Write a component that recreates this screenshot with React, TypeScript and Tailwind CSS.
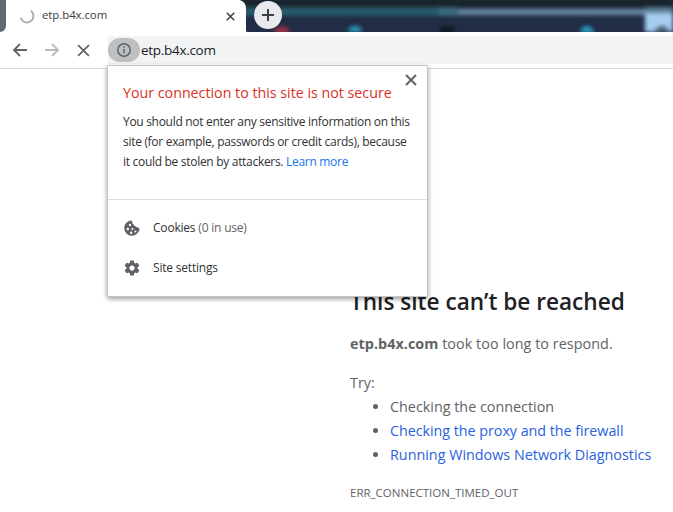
import React from "react";

function Cookie() {
  return (
    <svg width="16" height="16" viewBox="0 0 16 16">
      <path fill="#5f6368" d="M8 .4a7.700 7.700 0 1 0 7.600 7.800c-.9.100-1.500-.2-1.800-.9-1 .2-1.800-.2-2.100-1-1.200.1-2.100-.8-2-2C8.800 4 8 2.500 8 .4z" />
      <circle cx="6" cy="5" r="1.200" fill="#fff" />
      <circle cx="3.800" cy="9" r="1.200" fill="#fff" />
      <circle cx="8.300" cy="9" r="1" fill="#fff" />
      <circle cx="7.200" cy="12.700" r="1.200" fill="#fff" />
      <circle cx="11.500" cy="11.500" r="1" fill="#fff" />
    </svg>
  );
}

function Gear() {
  return (
    <svg width="18" height="18" viewBox="0 0 24 24">
      <path fill="#5f6368" d="M19.430 12.980c.04-.32.07-.64.07-.98s-.03-.66-.07-.98l2.110-1.650c.19-.15.240-.42.120-.64l-2-3.460c-.12-.22-.39-.3-.61-.22l-2.490 1c-.52-.4-1.080-.73-1.690-.98l-.38-2.650A.488.488 0 0 0 14 2h-4c-.25 0-.46.18-.49.420l-.38 2.650c-.61.25-1.170.59-1.690.98l-2.490-1c-.23-.09-.49 0-.61.220l-2 3.460c-.13.22-.07.49.120.64l2.110 1.650c-.04.32-.07.65-.07.980s.03.66.07.98l-2.110 1.650c-.19.15-.24.42-.12.64l2 3.460c.12.22.39.3.61.22l2.490-1c.52.4 1.080.73 1.690.98l.38 2.650c.03.24.24.42.49.42h4c.25 0 .46-.18.49-.42l.38-2.650c.61-.25 1.170-.59 1.690-.98l2.490 1c.23.09.49 0 .61-.22l2-3.460c.12-.22.07-.49-.12-.64l-2.110-1.650zM12 15.500c-1.930 0-3.500-1.570-3.500-3.500s1.570-3.500 3.500-3.500 3.500 1.570 3.500 3.500-1.570 3.500-3.500 3.500z" />
    </svg>
  );
}

function X({ size, color, w }: { size: number; color: string; w: number }) {
  return (
    <svg width={size} height={size} viewBox="0 0 12 12">
      <path d="M1 1l10 10M11 1L1 11" stroke={color} strokeWidth={w} fill="none" />
    </svg>
  );
}

function Arrow({ color, flip }: { color: string; flip?: boolean }) {
  return (
    <svg width="16" height="14" viewBox="0 0 16 14" className={flip ? "rotate-180" : ""}>
      <path d="M15 7H2M8 1L2 7l6 6" stroke={color} strokeWidth="1.800" fill="none" />
    </svg>
  );
}

export default function App() {
  return (
    <div className="w-[673px] h-[512px] overflow-hidden bg-white relative font-['Open_Sans','Noto_Sans',sans-serif]">
      {/* tab strip */}
      <div className="h-[32px] flex relative bg-white overflow-hidden">
        {/* blurred window behind the tab strip */}
        <div className="absolute left-[240px] right-0 top-0 bottom-0 rounded-bl-[8px] overflow-hidden bg-[#212c46]">
          <div className="absolute inset-0 blur-[2px]">
            <div className="absolute left-0 right-0 top-0 h-[7px] bg-[#182228]" />
            <div className="absolute left-0 w-[210px] top-[7px] h-[9px] bg-[#28596a]" />
            <div className="absolute left-[210px] w-[200px] top-[9px] h-[6px] bg-[#6b8ba5]" />
            <div className="absolute left-[198px] w-[20px] top-[7px] h-[9px] bg-[#3a6a7c]" />
            <div className="absolute left-[405px] right-0 top-[7px] h-[6px] bg-[#5b7f98]" />
            <div className="absolute left-[405px] right-0 top-[13px] bottom-0 bg-[#a6cdf0]" />
            <div className="absolute left-[415px] w-[14px] h-[8px] top-[26px] rounded-t-full bg-[#4b5a6b]" />
            <div className="absolute left-[34px] w-[16px] h-[6px] top-[27px] rounded-t-full bg-[#a83245]" />
            <div className="absolute left-[108px] w-[14px] h-[6px] top-[26px] rounded-t-full bg-[#2e9cc0]" />
            <div className="absolute left-[340px] w-[14px] h-[7px] top-[26px] rounded-t-full bg-[#2aa0c4]" />
            <div className="absolute left-[200px] w-[14px] h-[6px] top-[27px] bg-[#12161f]" />
          </div>
        </div>
        <div className="relative w-[6px] bg-[#5f6c78] rounded-br-[6px]" />
        <div className="relative w-[240px] bg-white rounded-t-[8px] flex items-center pl-[13px] pr-[11px]">
          <svg width="16" height="16" viewBox="0 0 16 16" className="shrink-0 mb-[1px]">
            <path d="M11.900 2.800A6.500 6.500 0 1 1 1.700 9.800" stroke="#a8acb0" strokeWidth="1.800" fill="none" />
          </svg>
          <span className="ml-[7px] text-[11.500px] leading-[14px] pb-[2px] text-[#3c4043] flex-1 tracking-[-0.1px]">etp.b4x.com</span>
          <X size={9} color="#3c4043" w={2} />
        </div>
        <div className="relative ml-[8px] mt-[1px] w-[28px] h-[28px] rounded-full bg-[#e8eaed] flex items-center justify-center">
          <svg width="12" height="12" viewBox="0 0 12 12">
            <path d="M6 0v12M0 6h12" stroke="#3c4043" strokeWidth="2" />
          </svg>
        </div>
      </div>

      {/* toolbar */}
      <div className="h-[37px] bg-white border-b border-[#dadce0] flex items-start">
        <div className="flex items-center h-[36px] pl-[12px]">
          <Arrow color="#5f6368" />
          <div className="ml-[16px]"><Arrow color="#b9bbbe" flip /></div>
          <div className="ml-[17px]"><X size={13} color="#5f6368" w={1.500} /></div>
        </div>
        <div className="ml-[18px] flex-1 h-[28px] mt-[4px] bg-[#f1f3f4] flex items-center">
          <div className="w-[32px] h-[24px] rounded-full bg-[#bdbfc1] flex items-center justify-center">
            <svg width="16" height="16" viewBox="0 0 16 16">
              <circle cx="8" cy="8" r="6.200" stroke="#5f6368" strokeWidth="1.500" fill="none" />
              <path d="M8 7v4.500M8 4.300v1.500" stroke="#5f6368" strokeWidth="1.500" />
            </svg>
          </div>
          <span className="ml-[1px] text-[13.500px] text-[#202124] tracking-[-0.3px]">etp.b4x.com</span>
        </div>
      </div>

      {/* page */}
      <main className="pl-[350px] pt-[218px]">
        <h1 className="text-[22.600px] leading-[30px] font-semibold text-[#202124] whitespace-nowrap">This site can’t be reached</h1>
        <p className="mt-[15px] text-[14.350px] leading-[24px] text-[#5f6368] whitespace-nowrap tracking-[0.05px]"><b className="font-bold">etp.b4x.com</b> took too long to respond.</p>
        <p className="mt-[15px] text-[14.350px] leading-[24px] text-[#5f6368]">Try:</p>
        <ul className="list-disc pl-[40px] text-[14.350px] leading-[24px] text-[#5f6368] whitespace-nowrap">
          <li>Checking the connection</li>
          <li><span className="text-[#2a62e0] tracking-[-0.05px]">Checking the proxy and the firewall</span></li>
          <li><span className="text-[#2a62e0]">Running Windows Network Diagnostics</span></li>
        </ul>
        <p className="mt-[18px] text-[11.500px] leading-[16px] text-[#5f6368] whitespace-nowrap">ERR_CONNECTION_TIMED_OUT</p>
      </main>

      {/* popup */}
      <div className="absolute left-[107px] top-[65px] w-[321px] h-[232px] bg-white border border-[#c4c5c7] rounded-[2px] shadow-[0_2px_5px_rgba(0,0,0,0.4)]">
        <div className="absolute right-[10px] top-[8px]"><X size={12} color="#5f6368" w={2} /></div>
        <div className="pl-[15px] pr-[16px] pt-[17px] h-[134px] border-b border-[#dadce0]">
          <h2 className="text-[14.240px] leading-[20px] text-[#d93025] whitespace-nowrap">Your connection to this site is not secure</h2>
          <p className="mt-[9px] text-[12px] leading-[20px] text-[#303134] whitespace-nowrap tracking-[-0.3px]">
            You should not enter any sensitive information on this<br />
            site (for example, passwords or credit cards), because<br />
            it could be stolen by attackers. <span className="text-[#1a73e8]">Learn more</span>
          </p>
        </div>
        <div className="pt-[8px] flex flex-col">
          <div className="h-[40px] flex items-center pl-[16px]">
            <Cookie />
            <span className="ml-[13px] text-[12px] text-[#303134] tracking-[-0.2px]">Cookies <span className="text-[#5f6368]">(0 in use)</span></span>
          </div>
          <div className="h-[40px] flex items-center pl-[15px]">
            <Gear />
            <span className="ml-[12px] text-[12px] text-[#303134] tracking-[-0.2px]">Site settings</span>
          </div>
        </div>
      </div>
    </div>
  );
}
